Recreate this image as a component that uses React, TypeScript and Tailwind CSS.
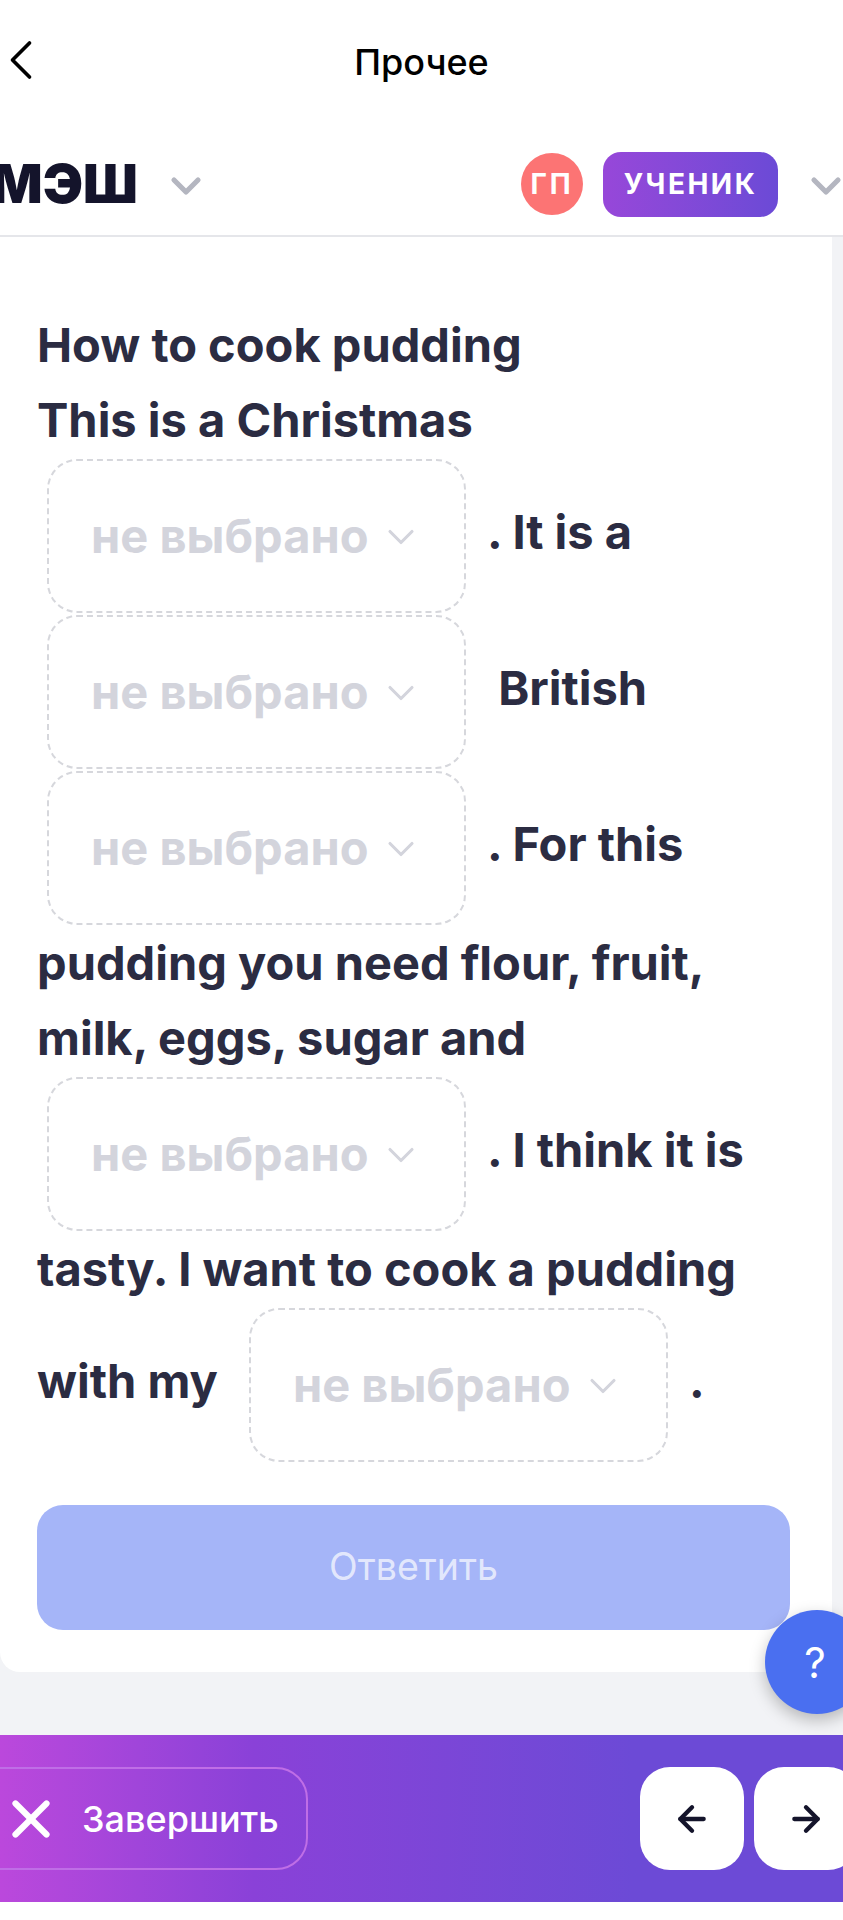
import { ArrowLeft, ArrowRight, ChevronDown, ChevronLeft, X } from "lucide-react";

function Blank() {
  return (
    <span className="inline-flex h-[154px] w-[419px] mt-[2px] ml-[10px] mr-[21px] items-center pl-[42px] pb-[2px] rounded-[30px] border-2 border-dashed border-[#d6d7dc] align-[-4px]">
      <span className="text-[#d3d4dc]">не выбрано</span>
      <ChevronDown className="ml-[10px] mt-[4px] text-[#d3d4dc]" size={44} strokeWidth={1.7} />
    </span>
  );
}

export default function App() {
  return (
    <div className="w-[843px] h-[1920px] overflow-hidden bg-white relative font-['Inter',sans-serif]">
      <div className="h-[125px] pb-[2px] flex items-center justify-center relative">
        <ChevronLeft className="absolute left-[-13px] top-[26px] text-black" size={68} strokeWidth={1.3} />
        <span className="text-[36px] font-medium text-black">Прочее</span>
      </div>

      <div className="h-[112px] pt-[8px] flex items-center border-b-2 border-[#e5e6ea]">
        <span className="ml-[-9px] text-[54px] leading-none font-black text-[#14142b]">МЭШ</span>
        <ChevronDown className="ml-[24px] mt-[4px] text-[#b4b6c0]" size={48} strokeWidth={2.6} />
        <div className="ml-auto w-[62px] h-[62px] rounded-full bg-[#fc7474] flex items-center justify-center text-white text-[28px] font-bold tracking-[3px]">
          ГП
        </div>
        <div className="ml-[20px] w-[175px] h-[65px] rounded-[18px] bg-gradient-to-r from-[#9747d9] to-[#6b4ad6] flex items-center justify-center text-white text-[28px] font-bold tracking-[2.5px]">
          УЧЕНИК
        </div>
        <ChevronDown className="ml-[24px] mt-[4px] mr-[-7px] shrink-0 text-[#b4b6c0]" size={48} strokeWidth={2.6} />
      </div>

      <div className="h-[1498px] bg-[#f2f3f6]">
        <div className="w-[832px] h-[1435px] bg-white rounded-bl-[20px] pt-[70px] pl-[37px] pr-[42px]">
          <div className="text-[47px] leading-[75px] font-bold text-[#2b2c42]">
            How to cook pudding
            <br />
            This is a Christmas <Blank />. It is a <Blank /> British <Blank />. For this pudding you need flour,
            fruit, milk, eggs, sugar and <Blank />. I think it is tasty. I want to cook a pudding{" "}
            <span className="mr-[10px]">with my</span> <Blank />.
          </div>
          <div className="mt-[43px] h-[125px] rounded-[26px] bg-[#a5b5f8] flex items-center justify-center text-[37.5px] text-white/70">
            Ответить
          </div>
        </div>
      </div>

      <div className="absolute left-[765px] top-[1610px] w-[104px] h-[104px] rounded-full bg-[#4a6ff0] shadow-[0_6px_16px_rgba(0,0,0,0.25)] flex items-center justify-center">
        <span className="text-white text-[42px] font-normal mr-[4px]">?</span>
      </div>

      <div className="h-[167px] bg-gradient-to-r from-[#bb48dc] via-[#8a41d8] via-30% to-[#6c4ad6] to-75% flex items-center">
        <div className="ml-[-30px] w-[338px] h-[103px] rounded-[32px] border-2 border-[#bf6ee6] flex items-center pl-[28px] shrink-0">
          <X className="text-white" size={62} strokeWidth={2.4} />
          <span className="ml-[20px] text-[36px] font-medium text-white">Завершить</span>
        </div>
        <div className="ml-auto w-[104px] h-[103px] rounded-[30px] bg-white flex items-center justify-center">
          <ArrowLeft className="text-[#14142b]" size={40} strokeWidth={2.6} />
        </div>
        <div className="ml-[10px] mr-[-15px] w-[104px] h-[103px] shrink-0 rounded-[30px] bg-white flex items-center justify-center">
          <ArrowRight className="text-[#14142b]" size={40} strokeWidth={2.6} />
        </div>
      </div>
    </div>
  );
}
